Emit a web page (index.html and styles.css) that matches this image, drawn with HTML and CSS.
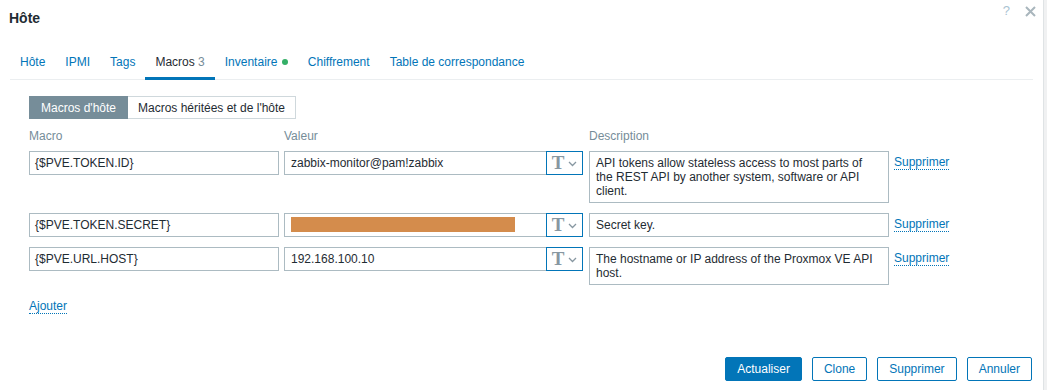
FILE: index.html
```html
<!DOCTYPE html>
<html lang="fr">
<head>
<meta charset="utf-8">
<title>Hôte</title>
<link rel="stylesheet" href="styles.css">
</head>
<body>
<div class="page">
  <div class="dialog">
    <div class="header">
      <h1 class="title">Hôte</h1>
      <div class="header-tools">
        <span class="help">?</span>
        <svg class="close" width="11" height="11" viewBox="0 0 11 11"><path d="M1 1L10 10M10 1L1 10" stroke="#a9b6bd" stroke-width="2"/></svg>
      </div>
    </div>
    <div class="content">
      <ul class="tabs">
        <li class="tab">Hôte</li>
        <li class="tab">IPMI</li>
        <li class="tab">Tags</li>
        <li class="tab active">Macros <span class="count">3</span></li>
        <li class="tab">Inventaire <span class="dot"></span></li>
        <li class="tab">Chiffrement</li>
        <li class="tab">Table de correspondance</li>
      </ul>
      <div class="panel">
        <div class="segmented">
          <span class="seg seg-active">Macros d'hôte</span>
          <span class="seg">Macros héritées et de l'hôte</span>
        </div>
        <div class="row labels">
          <div class="c-macro">Macro</div>
          <div class="c-value">Valeur</div>
          <div class="c-desc">Description</div>
        </div>
        <div class="row">
          <div class="c-macro"><div class="field">{$PVE.TOKEN.ID}</div></div>
          <div class="c-value">
            <div class="field value-field">zabbix-monitor@pam!zabbix</div>
            <div class="type-btn"><span class="t">T</span><svg width="9" height="6" viewBox="0 0 9 6"><path d="M1 1L4.5 4.5L8 1" fill="none" stroke="#8797a1" stroke-width="1.3"/></svg></div>
          </div>
          <div class="c-desc"><div class="field area">API tokens allow stateless access to most parts of the REST API by another system, software or API client.</div></div>
          <div class="c-act"><span class="link">Supprimer</span></div>
        </div>
        <div class="row">
          <div class="c-macro"><div class="field">{$PVE.TOKEN.SECRET}</div></div>
          <div class="c-value">
            <div class="field value-field"><span class="redact"></span></div>
            <div class="type-btn"><span class="t">T</span><svg width="9" height="6" viewBox="0 0 9 6"><path d="M1 1L4.5 4.5L8 1" fill="none" stroke="#8797a1" stroke-width="1.3"/></svg></div>
          </div>
          <div class="c-desc"><div class="field area">Secret key.</div></div>
          <div class="c-act"><span class="link">Supprimer</span></div>
        </div>
        <div class="row">
          <div class="c-macro"><div class="field">{$PVE.URL.HOST}</div></div>
          <div class="c-value">
            <div class="field value-field">192.168.100.10</div>
            <div class="type-btn"><span class="t">T</span><svg width="9" height="6" viewBox="0 0 9 6"><path d="M1 1L4.5 4.5L8 1" fill="none" stroke="#8797a1" stroke-width="1.3"/></svg></div>
          </div>
          <div class="c-desc"><div class="field area">The hostname or IP address of the Proxmox VE API host.</div></div>
          <div class="c-act"><span class="link">Supprimer</span></div>
        </div>
        <div class="add"><span class="link">Ajouter</span></div>
      </div>
    </div>
    <div class="footer">
      <button class="btn primary">Actualiser</button>
      <button class="btn">Clone</button>
      <button class="btn">Supprimer</button>
      <button class="btn">Annuler</button>
    </div>
  </div>
  <div class="scroll"></div>
</div>
</body>
</html>
```
FILE: styles.css
```css
* { box-sizing: border-box; }
html, body { margin: 0; padding: 0; }
body {
  font-family: "Liberation Sans", Arial, sans-serif;
  font-size: 12px;
  color: #1f2c33;
  background: #fff;
}
.page { display: flex; width: 1047px; height: 390px; overflow: hidden; }
.dialog { width: 1043px; height: 390px; display: flex; flex-direction: column; background: #fff; }
.scroll { flex: 1; background: #f0f1f2; border-left: 1px solid #dfe3e5; }

.header { height: 36px; padding: 0 7px 0 9px; display: flex; align-items: center; justify-content: space-between; }
.title { margin: 0; font-size: 14px; font-weight: bold; color: #1f2c33; line-height: 36px; }
.header-tools { display: flex; align-items: center; gap: 15px; align-self: flex-start; padding-top: 4px; }
.help { color: #aac3d2; font-size: 13px; line-height: 14px; }
.close { display: block; }

.content { padding: 0 10px; }
.tabs { list-style: none; margin: 12px 0 0; padding: 0; display: flex; gap: 0; border-bottom: 1px solid #ebeef0; }
.tab { padding: 0 10px; line-height: 29px; border-bottom: 3px solid transparent; color: #0275b8; margin-bottom: -1px; }
.tab.active { color: #1f2c33; border-bottom-color: #0275b8; }
.count { color: #768d99; }
.dot { display: inline-block; width: 6px; height: 6px; border-radius: 50%; background: #34af67; margin-left: 1px; vertical-align: 1px; }

.panel { padding: 16px 19px 0; }
.segmented { display: flex; height: 23px; }
.seg { display: flex; align-items: center; padding: 0 10px; border: 1px solid #cfd8dc; border-left: none; color: #1f2c33; background: #fff; }
.seg-active { background: #768d99; border: 1px solid #768d99; color: #fff; padding: 0 11px; }

.row { display: flex; gap: 5px; align-items: flex-start; margin-top: 10px; }
.labels { color: #768d99; line-height: 14px; margin-top: 10px; margin-bottom: -2px; }
.c-macro { width: 250px; }
.c-value { width: 300px; display: flex; }
.c-desc { width: 300px; }
.c-act { padding-top: 4px; line-height: 14px; }

.field { border: 1px solid #acbbc2; height: 24px; padding: 4px 5px; line-height: 14px; background: #fff; white-space: nowrap; }
.value-field { width: 263px; padding-left: 6px; }
.area { height: auto; white-space: normal; padding: 4px 10px 4px 6px; }
.redact { display: block; width: 224px; height: 15px; background: #d48c4c; margin-top: -1px; }
.type-btn { width: 37px; height: 24px; margin-left: -1px; border: 1px solid #0275b8; display: flex; align-items: center; justify-content: center; gap: 4px; background: #fff; }
.t { font-family: "Liberation Serif", "Times New Roman", serif; font-weight: bold; font-size: 19px; line-height: 18px; color: #8797a1; }
.type-btn svg { margin-top: 1px; }

.link { color: #0275b8; border-bottom: 1px dotted #0275b8; }
.add { margin-top: 14px; line-height: 14px; }

.footer { margin-top: auto; display: flex; justify-content: flex-end; gap: 10px; padding: 0 11px 9px 0; }
.btn { height: 24px; padding: 0 11px; font-family: "Liberation Sans", Arial, sans-serif; font-size: 12px; color: #0275b8; background: #fff; border: 1px solid #0275b8; border-radius: 2px; }
.btn.primary { background: #0275b8; color: #fff; }
```
